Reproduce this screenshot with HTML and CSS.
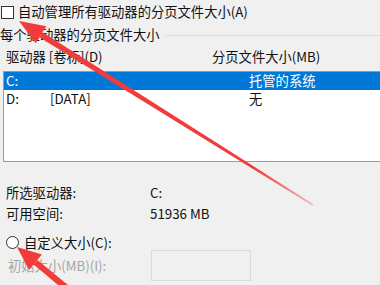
FILE: index.html
```html
<!DOCTYPE html>
<html lang="zh-CN">
<head>
<meta charset="utf-8">
<link rel="stylesheet" href="styles.css">
</head>
<body>
<div class="page">
  <div class="auto-row">
    <span class="checkbox"></span>
    <span class="label">自动管理所有驱动器的分页文件大小(A)</span>
  </div>
  <div class="group">
    <div class="group-title">
      <span>每个驱动器的分页文件大小</span>
      <span class="group-line"></span>
    </div>
    <div class="list-header">
      <span>驱动器 [卷标](D)</span>
      <span>分页文件大小(MB)</span>
    </div>
    <div class="listbox">
      <div class="row selected"><span>C:</span><span></span><span>托管的系统</span></div>
      <div class="row"><span>D:</span><span>[DATA]</span><span>无</span></div>
    </div>
    <div class="info">
      <span>所选驱动器:</span><span>C:</span>
      <span>可用空间:</span><span>51936 MB</span>
    </div>
    <div class="radio-row">
      <span class="radio"></span>
      <span>自定义大小(C):</span>
    </div>
    <div class="input-row">
      <span class="disabled">初始大小(MB)(I):</span>
      <span class="textbox"></span>
    </div>
  </div>
  <svg class="arrows" width="380" height="285" viewBox="0 0 380 285">
    <defs>
      <linearGradient id="fade1" gradientUnits="userSpaceOnUse" x1="20" y1="22" x2="313" y2="205">
        <stop offset="0" stop-color="#f23b3b" stop-opacity="1"/>
        <stop offset="0.8" stop-color="#f23b3b" stop-opacity="1"/>
        <stop offset="1" stop-color="#f23b3b" stop-opacity="0.3"/>
      </linearGradient>
    </defs>
    <polygon fill="#f23b3b" points="19,21 35.7,43.3 46.3,26.3"/>
    <polygon fill="url(#fade1)" points="39.4,37.3 42.6,32.3 313.4,204.3 312.6,205.7"/>
    <polygon fill="#f23b3b" points="17,247 29.1,270 41.9,254.6"/>
    <polygon fill="#f23b3b" points="33.6,264.6 37.4,260 111.7,320.7 107.3,326.1"/>
  </svg>
</div>
</body>
</html>
```
FILE: styles.css
```css
html, body {
  margin: 0;
  padding: 0;
  background: #f0f0f0;
}
body {
  font-family: "Noto Sans CJK SC", "Noto Sans", sans-serif;
  font-size: 13.3px;
  color: #111;
}
.page {
  position: relative;
  width: 380px;
  height: 285px;
  overflow: hidden;
}
.auto-row {
  display: flex;
  align-items: center;
  gap: 4px;
  height: 18px;
  margin-top: 3px;
  padding-left: 1px;
  line-height: 18px;
}
.checkbox {
  width: 13px;
  height: 13px;
  box-sizing: border-box;
  border: 1px solid #333;
  background: #fff;
}
.group {
  margin-top: 5px;
}
.group-title {
  display: flex;
  align-items: center;
  height: 18px;
  line-height: 18px;
  white-space: nowrap;
}
.group-line {
  flex: 1;
  height: 1px;
  background: #dcdcdc;
  margin-left: 5px;
}
.list-header {
  display: grid;
  grid-template-columns: 206px auto;
  padding-left: 6px;
  height: 18px;
  line-height: 18px;
  margin-top: 4px;
  white-space: nowrap;
}
.listbox {
  margin-top: 5px;
  margin-left: 3px;
  width: 400px;
  height: 91px;
  box-sizing: border-box;
  border: 1px solid #9b9b9b;
  background: #fff;
}
.row {
  display: grid;
  grid-template-columns: 44px 199px auto;
  padding-left: 2px;
  height: 18px;
  line-height: 18px;
  white-space: nowrap;
}
.row.selected {
  background: #0078d7;
  color: #fff;
}
.info {
  display: grid;
  grid-template-columns: 144px auto;
  row-gap: 3px;
  padding-left: 6px;
  margin-top: 22px;
  line-height: 18px;
}
.radio-row {
  display: flex;
  align-items: center;
  gap: 5px;
  padding-left: 6px;
  height: 16px;
  margin-top: 11px;
}
.radio {
  width: 13px;
  height: 13px;
  box-sizing: border-box;
  border: 1px solid #333;
  border-radius: 50%;
  background: #fff;
}
.input-row {
  display: grid;
  grid-template-columns: 143px 100px;
  align-items: center;
  padding-left: 8px;
  height: 31px;
}
.disabled {
  color: #a6a6a6;
}
.textbox {
  height: 31px;
  box-sizing: border-box;
  border: 1px solid #d9d9d9;
  background: #f0f0f0;
}
.arrows {
  position: absolute;
  left: 0;
  top: 0;
  pointer-events: none;
}
```
